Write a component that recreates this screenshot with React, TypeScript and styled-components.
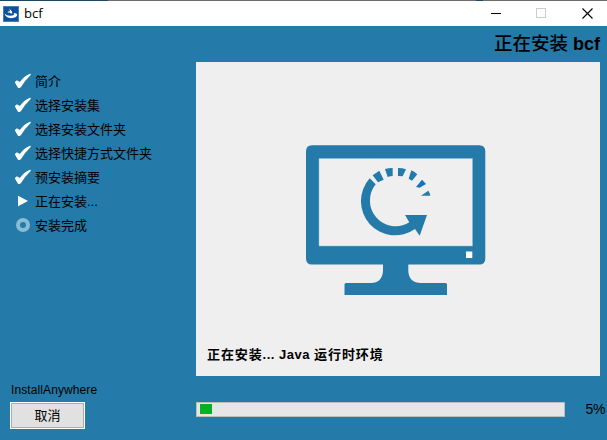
import React from "react";
import styled, { createGlobalStyle } from "styled-components";

const sans = `"Liberation Sans", "Noto Sans CJK SC", sans-serif`;

const GlobalStyle = createGlobalStyle`
  * { box-sizing: border-box; }
  body { margin: 0; overflow: hidden; font-family: ${sans}; color: #000; }
`;

const Window = styled.div`
  width: 607px;
  height: 440px;
  display: flex;
  flex-direction: column;
  background: #247aa8;
`;

const TitleBar = styled.header`
  height: 26px;
  flex: none;
  display: flex;
  align-items: center;
  background: #fff;
  border-top: 1px solid #6d6d6d;
  border-image: linear-gradient(90deg, #1c4560 109px, #6d6d6d 109px, #6d6d6d 475px, #1c4560 475px, #1c4560 482px, #6d6d6d 482px) 1;
  padding: 0 14px 0 3px;
`;

const Caption = styled.span`
  flex: 1;
  padding-left: 5px;
  font: 13px/23px "Open Sans", "Noto Sans", sans-serif;
`;

const Controls = styled.div`
  display: flex;
  gap: 35px;
  align-items: center;
`;

const Heading = styled.h1`
  margin: 0;
  height: 36px;
  flex: none;
  padding-right: 7px;
  text-align: right;
  font: bold 18px/36px ${sans};
  white-space: pre;
`;

const HeadingHan = styled.span`
  font-size: 18.5px;
  font-weight: 500;
`;

const Body = styled.div`
  flex: 1;
  display: grid;
  grid-template-columns: 196px 1fr;
`;

const Sidebar = styled.aside`
  display: flex;
  flex-direction: column;
  justify-content: space-between;
  padding: 7px 0 11px 10px;
`;

const Steps = styled.ul`
  margin: 0;
  padding: 0 0 0 4px;
  list-style: none;
`;

const Step = styled.li`
  height: 24px;
  display: flex;
  align-items: center;
  gap: 3px;
  font-size: 13px;
  white-space: nowrap;
`;

const StepLabel = styled.span`
  line-height: 22px;
  padding-top: 2px;
`;

const Brand = styled.div`
  padding-left: 1px;
  font-size: 12px;
  line-height: 14px;
  letter-spacing: 0.1px;
  margin-bottom: 5px;
`;

const CancelButton = styled.button`
  width: 75px;
  height: 27px;
  display: block;
  padding: 0;
  border: 1px solid #fff;
  background: #e1e1e1;
  box-shadow: inset 0 0 0 1px #adadad;
  font: 13px/23px ${sans};
  color: #000;
`;

const Main = styled.main`
  display: flex;
  flex-direction: column;
`;

const Panel = styled.section`
  width: 404px;
  height: 314px;
  background: #efefef;
  display: flex;
  flex-direction: column;
  justify-content: space-between;
  padding: 83px 11px 11px;
`;

const Artwork = styled.svg`
  display: block;
  margin-left: 99px;
`;

const Status = styled.div`
  font: bold 13px/20px ${sans};
  letter-spacing: 0.9px;
  white-space: pre;
`;

const Latin = styled.span`
  letter-spacing: 0.5px;
`;

const ProgressRow = styled.div`
  display: flex;
  align-items: center;
  padding: 26px 2px 0 0;
`;

const Track = styled.div`
  width: 369px;
  height: 15px;
  padding: 1px 3px;
  border: 1px solid #bcbcbc;
  background: #e6e6e6;
`;

const Fill = styled.div`
  width: 12px;
  height: 10px;
  background: #06b025;
`;

const Percent = styled.span`
  flex: 1;
  text-align: right;
  font-size: 14px;
  line-height: 15px;
  letter-spacing: -0.4px;
`;

type StepState = "done" | "current" | "pending";

const StepIcon = ({ state }: { state: StepState }) => (
  <svg width="18" height="18" viewBox="0 0 18 18" fill="#fff">
    {state === "done" && (
      <path d="M.8 10.2 2.8 8.2 5.8 10.1Q10 4.2 15.8 1.8Q17 1.6 16.7 3Q11.4 8 7 15Q5.4 17 3.6 15.2Z" />
    )}
    {state === "current" && <path d="M4 3.8 14 9 4 14.2Z" />}
    {state === "pending" && <circle cx="9" cy="9" r="5" fill="none" stroke="#8abbd5" strokeWidth="4" />}
  </svg>
);

const steps: { label: string; state: StepState }[] = [
  { label: "简介", state: "done" },
  { label: "选择安装集", state: "done" },
  { label: "选择安装文件夹", state: "done" },
  { label: "选择快捷方式文件夹", state: "done" },
  { label: "预安装摘要", state: "done" },
  { label: "正在安装...", state: "current" },
  { label: "安装完成", state: "pending" },
];

const AppIcon = () => (
  <svg width="16" height="16" viewBox="0 0 16 16">
    <rect width="16" height="16" fill="#0c529b" />
    <rect x=".5" y=".5" width="15" height="15" fill="none" stroke="#4d7fae" />
    <path d="M1.5 7.5Q3.5 9.8 7.5 9.7Q11 9.5 11.3 8.2Q11.5 7.4 10 7Q14 6.6 14.2 8.8Q13.6 12 8.4 12.2Q2.8 12 1.5 7.5Z" fill="#fff" />
    <path d="M6.4 2.6 9 5.6 9.2 7.6 7 7.2 6.8 6.4 4.4 6.6 5.4 5.2 7 5.4Z" fill="#fff" />
  </svg>
);

const MonitorArtwork = () => (
  <Artwork width="180" height="151" viewBox="306 145 180 151" fill="#247aa8">
    <path
      fillRule="evenodd"
      d="M312 145.3H479.3Q485.3 145.3 485.3 151.3V258.5Q485.3 264.5 479.3 264.5H408.3V271Q409 283 421 283H445.5Q447 283 447 284.5V295H344.5V284.5Q344.5 283 346 283H371Q382 283 383 271V264.5H312Q306 264.5 306 258.5V151.3Q306 145.3 312 145.3ZM319 158.5V246H472.5V158.5Z"
    />
    <path d="M319 158.5H472.5V246H319Z" fill="none" stroke="#8fc0de" strokeWidth=".5" />
    <rect x="466" y="251.5" width="6.3" height="6.5" fill="#fff" />
    <path d="M369.7 178.3A34.2 34.2 0 0 0 415 229L419.7 235.7 427 215H405L409.3 222.3A25.7 25.7 0 0 1 375.7 184.3Z" />
    <g transform="translate(340 150) scale(.33333)">
      <path d="M98 76 118 62 131 89 114 97Z" />
      <path d="M135 57Q146 54 158 54V78Q151 78 143 81Z" />
      <path d="M174 54Q187 54 198 58L188 79Q182 78 174 78Z" />
      <path d="M214 61Q224 65 232 73L216 92 206 86Z" />
      <path d="M246 89 258 102 239 113 228 111Z" fill="#1175bd" />
      <path d="M265 122Q270 129 271 137H243Z" />
    </g>
  </Artwork>
);

export default function App() {
  return (
    <Window>
      <GlobalStyle />
      <TitleBar>
        <AppIcon />
        <Caption>bcf</Caption>
        <Controls>
          <svg width="11" height="11" stroke="#000">
            <path d="M1 5.5H11" />
          </svg>
          <svg width="11" height="11" fill="none" stroke="#ccc">
            <rect x=".5" y=".5" width="9" height="9" />
          </svg>
          <svg width="11" height="11" stroke="#000" strokeWidth="1.1">
            <path d="M.5.5 10.5 10.5M10.5.5.5 10.5" />
          </svg>
        </Controls>
      </TitleBar>
      <Heading>
        <HeadingHan>正在安装</HeadingHan> bcf
      </Heading>
      <Body>
        <Sidebar>
          <Steps>
            {steps.map((s) => (
              <Step key={s.label}>
                <StepIcon state={s.state} />
                <StepLabel>{s.label}</StepLabel>
              </Step>
            ))}
          </Steps>
          <div>
            <Brand>InstallAnywhere</Brand>
            <CancelButton>取消</CancelButton>
          </div>
        </Sidebar>
        <Main>
          <Panel>
            <MonitorArtwork />
            <Status>
              正在安装<Latin>... Java </Latin>运行时环境
            </Status>
          </Panel>
          <ProgressRow>
            <Track>
              <Fill />
            </Track>
            <Percent>5%</Percent>
          </ProgressRow>
        </Main>
      </Body>
    </Window>
  );
}
